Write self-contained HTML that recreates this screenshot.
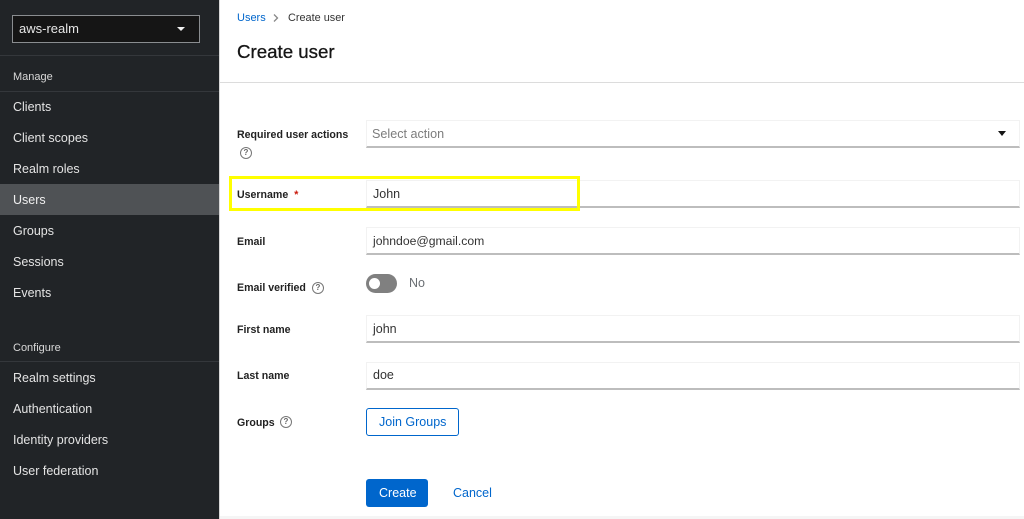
<!DOCTYPE html>
<html><head><meta charset="utf-8">
<style>
html,body{margin:0;padding:0;background:#fff}
#p{position:relative;width:1024px;height:519px;overflow:hidden;background:#fff;font-family:"Liberation Sans",sans-serif;font-size:13px;color:#151515}
#p div,#p span.a,#p svg{position:absolute}
.t{white-space:nowrap;line-height:16px}
.n{color:#e4e4e4;left:13px;font-size:12.5px}
.s{color:#d8d8d8;left:13px;font-size:11px}
.l{left:237px;font-weight:bold;font-size:10.6px;color:#222}
.i{left:366px;width:654px;height:28px;background:#fff;border:1px solid #f2f2f2;border-bottom:2px solid #bdbdbd;box-sizing:border-box}
.v{left:373px;color:#333;font-size:12.5px}
.h{width:10px;height:10px;border:1px solid #777;border-radius:50%;color:#666;font-size:8px;line-height:10px;text-align:center;font-weight:bold}
.sep{left:0;width:219px;height:1px;background:#34373b}
</style></head><body>
<div id="p">
<div style="left:0;top:0;width:219px;height:519px;background:#212427"></div>
<div style="left:219px;top:0;width:1px;height:519px;background:#d8d8d8"></div>
<div style="left:12px;top:15px;width:188px;height:28px;box-sizing:border-box;background:#151515;border:1px solid #8a8d90"></div>
<div class="t" style="left:19px;top:21px;color:#e6e6e6;font-size:13px">aws-realm</div>
<div style="left:177px;top:27px;width:0;height:0;border-left:4.5px solid transparent;border-right:4.5px solid transparent;border-top:4.5px solid #f0f0f0"></div>
<div class="sep" style="top:55px"></div>
<div class="t s" style="top:69px">Manage</div>
<div class="sep" style="top:91px"></div>
<div class="t n" style="top:99px">Clients</div>
<div class="t n" style="top:130px">Client scopes</div>
<div class="t n" style="top:161px">Realm roles</div>
<div style="left:0;top:184px;width:219px;height:31px;background:#4f5255"></div>
<div class="t n" style="top:192px;color:#f0f0f0">Users</div>
<div class="t n" style="top:223px">Groups</div>
<div class="t n" style="top:254px">Sessions</div>
<div class="t n" style="top:285px">Events</div>
<div class="t s" style="top:340px">Configure</div>
<div class="sep" style="top:361px"></div>
<div class="t n" style="top:370px">Realm settings</div>
<div class="t n" style="top:401px">Authentication</div>
<div class="t n" style="top:432px">Identity providers</div>
<div class="t n" style="top:463px">User federation</div>

<div class="t" style="left:237px;top:10px;font-size:11px;color:#0066cc">Users</div>
<svg style="left:273px;top:14px" width="6" height="8" viewBox="0 0 6 8"><path d="M1 .5 4.5 4 1 7.5" fill="none" stroke="#888" stroke-width="1.3"/></svg>
<div class="t" style="left:288px;top:10px;font-size:10.9px;color:#333">Create user</div>
<div class="t" style="left:237px;top:41px;font-size:18.7px;line-height:22px;color:#151515;-webkit-text-stroke:.3px #151515">Create user</div>
<div style="left:220px;top:82px;width:804px;height:1px;background:#dcdcdc"></div>

<div class="t l" style="top:127px">Required user actions</div>
<div class="h" style="left:240px;top:147px">?</div>
<div class="i" style="top:120px"></div>
<div class="t" style="left:372px;top:126px;color:#7c7c7c;font-size:12.6px">Select action</div>
<div style="left:998px;top:131px;width:0;height:0;border-left:4.5px solid transparent;border-right:4.5px solid transparent;border-top:5px solid #151515"></div>

<div class="i" style="top:180px"></div>
<div style="left:229px;top:176px;width:351px;height:35px;box-sizing:border-box;border:3px solid #ffff00"></div>
<div class="t l" style="top:187px">Username <span style="color:#c9190b;margin-left:3px">*</span></div>
<div class="t v" style="top:186px">John</div>

<div class="t l" style="top:234px">Email</div>
<div class="i" style="top:227px"></div>
<div class="t v" style="top:233px;font-size:12.2px">johndoe@gmail.com</div>

<div class="t l" style="top:280px">Email verified</div>
<div class="h" style="left:312px;top:282px">?</div>
<div style="left:366px;top:274px;width:31px;height:19px;border-radius:10px;background:#808080"></div>
<div style="left:369px;top:278px;width:11px;height:11px;border-radius:50%;background:#fff"></div>
<div class="t" style="left:409px;top:275px;color:#6a6e73;font-size:12.5px">No</div>

<div class="t l" style="top:322px">First name</div>
<div class="i" style="top:315px"></div>
<div class="t v" style="top:321px">john</div>

<div class="t l" style="top:368px">Last name</div>
<div class="i" style="top:362px"></div>
<div class="t v" style="top:367px">doe</div>

<div class="t l" style="top:415px">Groups</div>
<div class="h" style="left:280px;top:416px">?</div>
<div style="left:366px;top:408px;width:93px;height:28px;box-sizing:border-box;border:1px solid #0066cc;border-radius:3px"></div>
<div class="t" style="left:379px;top:414px;color:#0066cc;font-size:12.5px">Join Groups</div>

<div style="left:366px;top:479px;width:62px;height:28px;background:#0066cc;border-radius:3px"></div>
<div class="t" style="left:379px;top:485px;color:#fff;font-size:12.5px">Create</div>
<div class="t" style="left:453px;top:485px;color:#0066cc;font-size:12.5px">Cancel</div>
<div style="left:220px;top:516px;width:804px;height:3px;background:#f5f5f5"></div>
</div>
</body></html>
